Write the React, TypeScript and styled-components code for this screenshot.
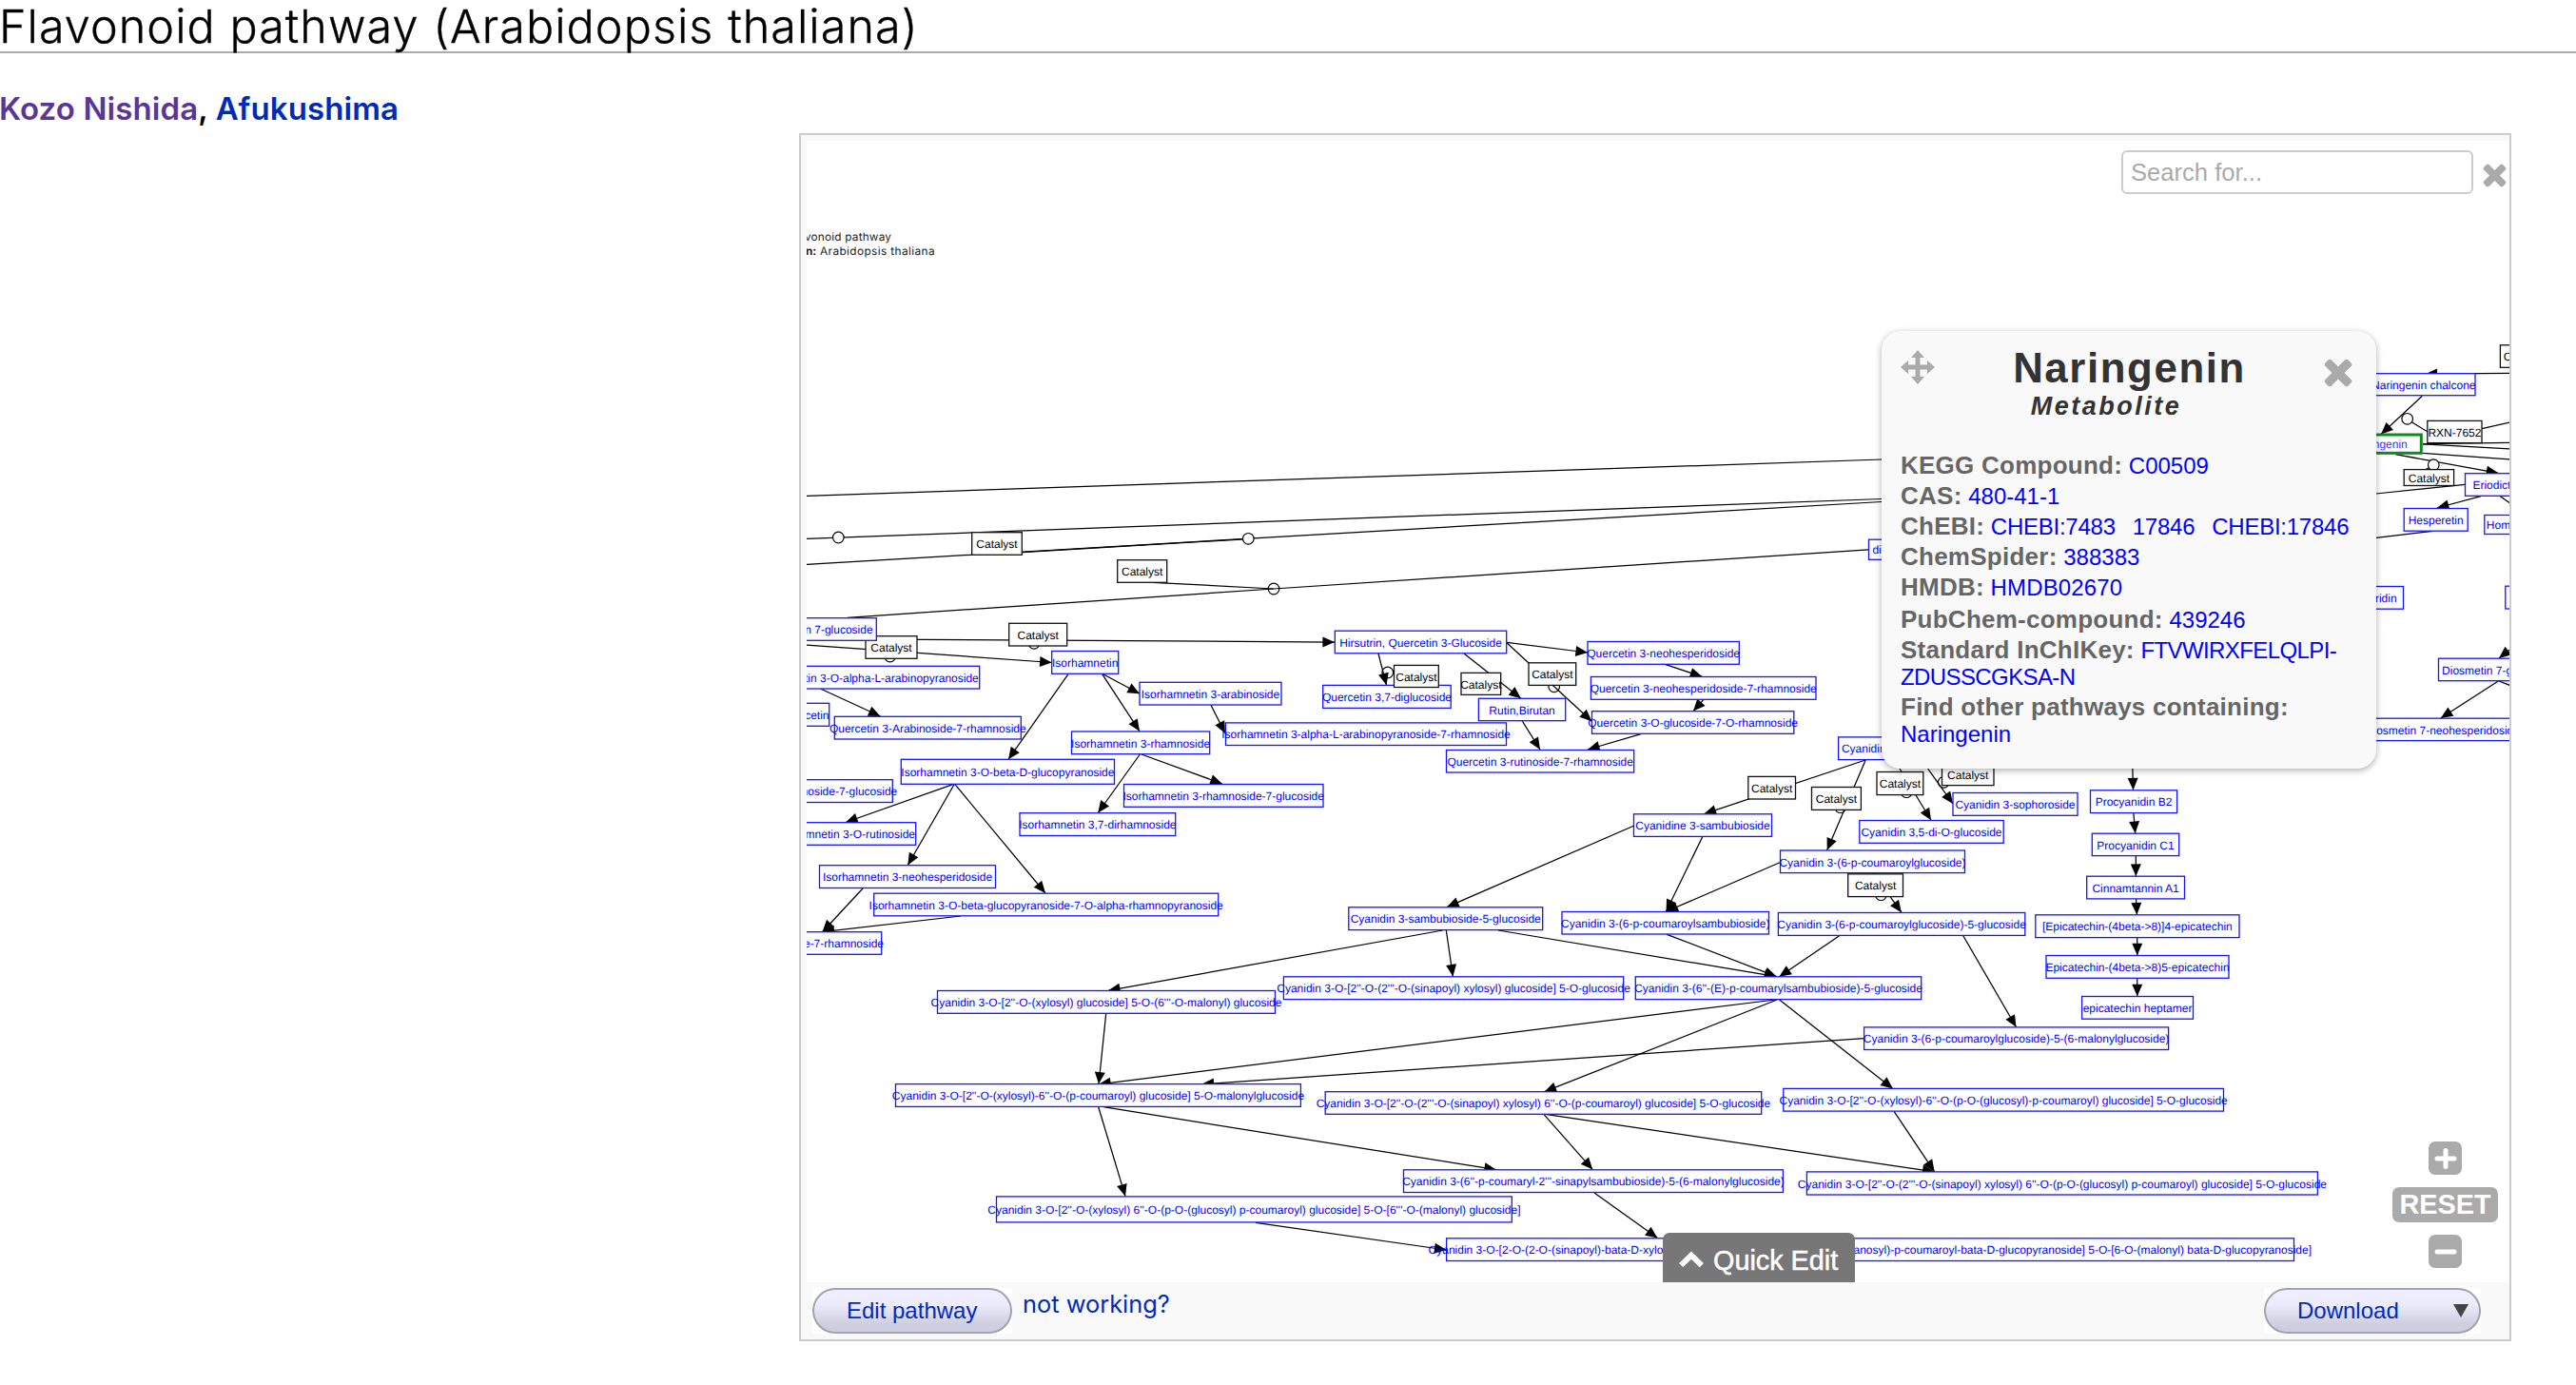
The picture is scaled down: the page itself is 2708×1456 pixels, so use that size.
import React from "react";
import styled, { createGlobalStyle, css } from "styled-components";

const sans = `"Liberation Sans", Arial, Helvetica, sans-serif`;
const wiki = `Inter, "Noto Sans", sans-serif`;

const GlobalStyle = createGlobalStyle`
  html, body { margin: 0; padding: 0; background: #fff; }
  body { font-family: ${wiki}; color: #000; overflow: hidden; }
  a { text-decoration: none; }
`;

const Page = styled.main`
  display: flex;
  flex-direction: column;
  width: 2708px;
  height: 1456px;
`;

const Title = styled.h1`
  margin: 0 0 0 -1px;
  height: 54px;
  border-bottom: 2px solid #aaa;
  font-size: 48.5px;
  font-weight: 300;
  line-height: 56px;
  letter-spacing: 1.05px;
  -webkit-text-stroke: 0.35px #000;
  white-space: nowrap;
`;

const Authors = styled.p`
  margin: 33px 0 0 -1px;
  height: 51px;
  font-size: 33px;
  font-weight: 600;
  line-height: 51px;
  letter-spacing: 0.1px;
  white-space: nowrap;
`;

const AuthorLink = styled.a<{ $visited?: boolean }>`
  color: ${(p) => (p.$visited ? "#5a3696" : "#002bb8")};
`;

const Panel = styled.section`
  display: grid;
  grid-template-rows: 1200px 60px;
  box-sizing: border-box;
  width: 1800px;
  height: 1270px;
  margin-left: 840px;
  padding: 6px 0 0 6px;
  border: 2px solid #ccc;
  background: #f9f9f9;
  font-family: ${sans};
`;

const Viewer = styled.div`
  position: relative;
  overflow: hidden;
  background: #fff;
`;

const Diagram = styled.svg`
  display: block;
  width: 1790px;
  height: 1200px;
  font-family: ${sans};
  font-size: 12px;
  text-rendering: geometricPrecision;
`;

const Edge = styled.line`
  stroke: #000;
  stroke-width: 1.25;
`;

const Head = styled.polygon`
  fill: #000;
`;

const Ring = styled.circle<{ $solid?: boolean }>`
  fill: ${(p) => (p.$solid ? "#fff" : "none")};
  stroke: #000;
  stroke-width: 1.2;
`;

type Tone = "blue" | "black" | "green";

const NodeBox = styled.rect<{ $tone: Tone }>`
  fill: #fff;
  stroke: ${(p) => (p.$tone === "blue" ? "#1414ff" : p.$tone === "green" ? "#118a1c" : "#111")};
  stroke-width: ${(p) => (p.$tone === "green" ? 3 : 1.3)};
`;

const NodeText = styled.text<{ $tone: Tone }>`
  fill: ${(p) => (p.$tone === "black" ? "#000" : p.$tone === "green" ? "#3232ff" : "#0000ff")};
`;

const InfoText = styled.text`
  fill: #1a1a1a;
  font-family: ${wiki};
  font-size: 11.8px;
`;

const SearchBar = styled.form`
  position: absolute;
  top: 10px;
  right: 3px;
  display: flex;
  align-items: center;
  gap: 10px;
`;

const SearchInput = styled.input`
  box-sizing: border-box;
  width: 370px;
  height: 46px;
  padding: 0 0 0 8px;
  border: 2px solid #ccc;
  border-radius: 6px;
  background: #fff;
  font: 25.6px ${sans};
  outline: none;
  &::placeholder { color: #aaa; opacity: 1; }
`;

const CloseMark = styled.svg<{ $size: number; $drop?: number }>`
  display: block;
  flex: none;
  width: ${(p) => p.$size}px;
  height: ${(p) => p.$size}px;
  margin-top: ${(p) => p.$drop ?? 0}px;
  fill: #aaa;
`;

const MoveMark = styled.svg`
  display: block;
  width: 36px;
  height: 36px;
  margin: 5px 0 0 -0.5px;
  fill: #aaa;
`;

const Popup = styled.aside`
  position: absolute;
  left: 1130px;
  top: 200px;
  box-sizing: border-box;
  width: 520px;
  height: 460px;
  padding: 15px 25px 0 20px;
  border-radius: 20px;
  background: #f9f9f9;
  box-shadow: 0 2px 7px rgba(0, 0, 0, 0.32);
`;

const PopupHeader = styled.header`
  display: grid;
  grid-template-columns: 36px 1fr 30px;
  height: 112.5px;
`;

const Heading = styled.div`
  text-align: center;
  color: #333;
  font-weight: bold;
`;

const Name = styled.div`
  font-size: 43.8px;
  line-height: 48px;
  letter-spacing: 1.6px;
`;

const Kind = styled.div`
  margin-top: 1px;
  padding-right: 49px;
  font-size: 27px;
  font-style: italic;
  line-height: 30px;
  letter-spacing: 2.5px;
`;

const Row = styled.div<{ $before?: number; $wrap?: boolean }>`
  margin-top: ${(p) => p.$before ?? 4}px;
  font-size: 24px;
  line-height: 28px;
  white-space: ${(p) => (p.$wrap ? "normal" : "nowrap")};
`;

const Label = styled.b`
  color: #666;
  font-size: 26px;
  line-height: 0;
  letter-spacing: 0.25px;
`;

const RefLink = styled.a<{ $tracking?: number }>`
  color: #0000ff;
  letter-spacing: ${(p) => p.$tracking ?? 0}px;
  & + & { margin-left: 18px; }
`;

const ZoomControls = styled.div`
  position: absolute;
  right: 12px;
  top: 1052px;
  display: flex;
  flex-direction: column;
  align-items: center;
  gap: 13px;
`;

const greyKey = css`
  display: flex;
  align-items: center;
  justify-content: center;
  border-radius: 7px;
  background: #aaa;
`;

const ZoomKey = styled.div`
  ${greyKey}
  width: 35px;
  height: 35px;
`;

const ResetKey = styled.div`
  ${greyKey}
  width: 111px;
  height: 37px;
  color: #fff;
  font-size: 28.8px;
  font-weight: bold;
  line-height: 37px;
`;

const KeyGlyph = styled.svg`
  width: 24px;
  height: 24px;
  stroke: #fff;
  stroke-width: 5;
  stroke-linecap: round;
`;

const QuickEdit = styled.div`
  position: absolute;
  left: 900px;
  bottom: 0;
  display: flex;
  align-items: center;
  gap: 10px;
  box-sizing: border-box;
  width: 202px;
  height: 52px;
  padding: 6px 0 0 17px;
  border-radius: 7px 7px 0 0;
  background: #777;
  color: #fff;
  font-size: 28.8px;
  -webkit-text-stroke: 0.5px #fff;
  white-space: nowrap;
`;

const QuickEditMark = styled.svg`
  width: 26px;
  height: 18px;
  margin-top: -3px;
  fill: none;
  stroke: #fff;
  stroke-width: 6;
`;

const Footer = styled.footer`
  display: flex;
  align-items: flex-start;
  padding: 6px 30px 0 6px;
`;

const PillFrame = styled.div<{ $width: number }>`
  width: ${(p) => p.$width}px;
  height: 48px;
  background: #fff;
`;

const Pill = styled.div<{ $inset: number }>`
  display: flex;
  align-items: center;
  box-sizing: border-box;
  height: 48px;
  padding: 0 11px 1px ${(p) => p.$inset}px;
  border: 2.5px solid #a2a2b0;
  border-radius: 24px;
  background: linear-gradient(#eeeeff 0%, #ececfd 35%, #cfcfdf 80%, #cdcddd 100%);
  color: #002bb8;
  font-size: 24px;
  white-space: nowrap;
`;

const Caret = styled.i`
  margin-left: auto;
  border: 8px solid transparent;
  border-top: 14px solid #444;
  border-bottom: 0;
`;

const HelpLink = styled.a`
  margin: 0 auto 0 11px;
  color: #002bb8;
  font: 400 25.4px/34px ${wiki};
`;

/* Reactions: x1, y1, x2, y2, and 1 when the line ends in an arrowhead. */
const edges: [number, number, number, number, number?][] = [
  [848, 521.3, 1978, 483],
  [848, 566.3, 1978, 524.5],
  [848, 593.3, 1978, 527.5],
  [1074.7, 580.7, 1312, 566.6],
  [890.7, 649.3, 1339, 619],
  [1339, 619, 1964, 577.8],
  [1211.7, 612.3, 1339, 619],
  [921, 672, 1403, 675, 1],
  [848, 678, 1105.7, 696.5, 1],
  [863, 724.3, 925.5, 753, 1],
  [1123, 708.7, 1060, 798.3, 1],
  [1158.7, 708.7, 1198, 768.7, 1],
  [1159.7, 708.7, 1198, 729.3, 1],
  [1273, 741.3, 1288, 771, 1],
  [1198.3, 793, 1154.3, 854.5, 1],
  [1200, 793, 1284.9, 824, 1],
  [1001.7, 824.7, 889, 864.5, 1],
  [1003, 824.7, 954.3, 909.5, 1],
  [1004, 824.7, 1099, 939, 1],
  [907, 934, 864.5, 979.7, 1],
  [1010, 963, 864.5, 979.7, 1],
  [1449, 687, 1457.5, 720.3, 1],
  [1539, 687, 1598.9, 734.2, 1],
  [1584, 675.3, 1669, 686, 1],
  [1584, 675.7, 1673.3, 758.3, 1],
  [1751, 698.7, 1789.3, 711.3, 1],
  [1790.7, 735.7, 1780, 747.6, 1],
  [1725, 771.7, 1669, 788, 1],
  [1600.3, 758, 1619, 788, 1],
  [1961, 799, 1791.5, 855.6, 1],
  [1717.3, 868.3, 1521, 953.6, 1],
  [1789.7, 879.7, 1751.5, 958.3, 1],
  [1871, 906.7, 1751.5, 958.3, 1],
  [1520.3, 978, 1527.4, 1026.6, 1],
  [1516.7, 978, 1165, 1041.3, 1],
  [1575, 978, 1867.5, 1026.6, 1],
  [1752.3, 982.3, 1867.5, 1026.6, 1],
  [1961.2, 799, 1920.7, 893.8, 1],
  [1997, 808, 2030, 862.3, 1],
  [2026.6, 808, 2053, 845, 1],
  [2241.8, 806, 2242.5, 830.5, 1],
  [2242.9, 855, 2244.7, 876, 1],
  [2245.3, 900, 2245.4, 921, 1],
  [2245.6, 945.3, 2246.4, 961.6, 1],
  [2246.7, 986, 2246.8, 1004.3, 1],
  [2246.7, 1028.7, 2246.8, 1047.3, 1],
  [1969, 917.7, 1998.9, 959.2, 1],
  [1933.6, 983.7, 1870.4, 1026.8, 1],
  [2063.8, 983.7, 2119.5, 1079.8, 1],
  [1959.5, 1091.7, 1263.5, 1139.8, 1],
  [1866, 1051, 1155, 1139.8, 1],
  [1868, 1051, 1623.5, 1147.7, 1],
  [1870.6, 1051, 1989.9, 1144.4, 1],
  [1162.7, 1065.7, 1155, 1139.6, 1],
  [1154.7, 1163.7, 1183, 1257.6, 1],
  [1160, 1163.7, 1573, 1229.7, 1],
  [1320, 1285.3, 1520.5, 1314, 1],
  [1623.1, 1171.7, 1674.3, 1229.6, 1],
  [1626.2, 1171.7, 2033.6, 1231.8, 1],
  [1676.1, 1254, 1742.5, 1301.6, 1],
  [1991.1, 1168.3, 2033.6, 1231.8, 1],
  [2640, 392.4, 2549.5, 393.2, 1],
  [2546.3, 416.3, 2503, 456.5, 1],
  [2535.7, 444, 2551.7, 453.7],
  [2609, 450.7, 2640, 443.6],
  [2547, 466.7, 2640, 465.3],
  [2547, 466.9, 2640, 471.9],
  [2546.7, 476.3, 2640, 483],
  [2518.3, 477.7, 2626.3, 497.3, 1],
  [2553, 492, 2547, 495],
  [2591.3, 509.3, 2498, 519],
  [2608, 521.7, 2561.8, 534, 1],
  [2628.3, 521.7, 2640, 530],
  [2557.3, 558.3, 2498, 565.4],
  [2642, 680, 2627, 691.9, 1],
  [2626.3, 716, 2565.8, 755, 1],
  [2627, 716, 2640, 721],
];

/* Catalysis anchors: cx, cy, and 1 when the ring hides the line beneath it. */
const rings: [number, number, number?][] = [
  [881.3, 565, 1],
  [1312.3, 566.3, 1],
  [1339, 619],
  [935.7, 690],
  [1087, 676.3],
  [1458.8, 707],
  [1633.7, 721.8],
  [1934.7, 848.7],
  [2004.2, 832.7],
  [2043.3, 822.3],
  [1977.4, 940.7],
  [2530.7, 440.3],
  [2558.3, 488.7, 1],
];

/* Data nodes: left, top, right, bottom, label. A label runs from `start`, or up to `end`, where it is not centred. */
type PathNode = {
  box: [number, number, number, number];
  label: string;
  tone?: Tone;
  start?: number;
  end?: number;
};

const n = (l: number, t: number, r: number, b: number, label: string, extra: Partial<PathNode> = {}): PathNode => ({
  box: [l, t, r, b],
  label,
  ...extra,
});
const cat = (l: number, t: number, r: number, b: number, extra: Partial<PathNode> = {}): PathNode =>
  n(l, t, r, b, "Catalyst", { tone: "black", ...extra });

const nodes: PathNode[] = [
  cat(1021.7, 559.7, 1074.3, 583.3),
  cat(1174.7, 588.7, 1226.7, 612.3),
  cat(910, 668.7, 964, 692.3),
  n(830, 649.7, 921.3, 673.3, "n 7-glucoside", { end: 917.6 }),
  n(830, 700.3, 1029.7, 724, "tin 3-O-alpha-L-arabinopyranoside", { end: 1028.8 }),
  cat(1060.7, 655.3, 1121.7, 679),
  n(1105.7, 684.5, 1175.7, 708.3, "Isorhamnetin"),
  n(1198, 717.3, 1347, 741, "Isorhamnetin 3-arabinoside"),
  n(830, 739.3, 871.7, 763.3, "cetin", { end: 871.5 }),
  n(877.3, 753.3, 1073.3, 777, "Quercetin 3-Arabinoside-7-rhamnoside"),
  n(1288.5, 759.9, 1583.5, 783.5, "Isorhamnetin 3-alpha-L-arabinopyranoside-7-rhamnoside"),
  n(1126.5, 769, 1271.7, 792.7, "Isorhamnetin 3-rhamnoside"),
  n(947.3, 798.3, 1171.5, 824.3, "Isorhamnetin 3-O-beta-D-glucopyranoside"),
  n(830, 819.7, 938.3, 843.5, "noside-7-glucoside", { end: 943.3 }),
  n(830, 864.7, 962.7, 888.3, "mnetin 3-O-rutinoside", { end: 962 }),
  n(1181.5, 824.5, 1391, 848.3, "Isorhamnetin 3-rhamnoside-7-glucoside"),
  n(1072, 854.7, 1235.7, 878.5, "Isorhamnetin 3,7-dirhamnoside"),
  n(861.5, 909.7, 1046.5, 933.5, "Isorhamnetin 3-neohesperidoside"),
  n(918.7, 939.2, 1280.7, 962.8, "Isorhamnetin 3-O-beta-glucopyranoside-7-O-alpha-rhamnopyranoside"),
  n(830, 979.7, 926.7, 1003.3, "e-7-rhamnoside", { end: 929 }),
  n(1403.3, 663.2, 1583.7, 686.8, "Hirsutrin, Quercetin 3-Glucoside"),
  n(1390.7, 720.4, 1525.2, 744.4, "Quercetin 3,7-diglucoside"),
  cat(1465.5, 699.4, 1512.3, 722.5),
  n(1554.4, 734.3, 1645.7, 757.7, "Rutin,Birutan"),
  cat(1536, 707.4, 1577.7, 730.4),
  cat(1607, 696.8, 1656.7, 720.4),
  n(1669, 674.5, 1828.3, 698.3, "Quercetin 3-neohesperidoside"),
  n(1672.4, 711.5, 1909, 735.3, "Quercetin 3-neohesperidoside-7-rhamnoside"),
  n(1673.5, 747.7, 1885.8, 771.3, "Quercetin 3-O-glucoside-7-O-rhamnoside"),
  n(1520.5, 788.5, 1717.7, 812, "Quercetin 3-rutinoside-7-rhamnoside"),
  n(1717.5, 855.8, 1862.5, 879.4, "Cyanidine 3-sambubioside"),
  n(1417.8, 953.8, 1621.7, 977.6, "Cyanidin 3-sambubioside-5-glucoside"),
  n(1642, 958.5, 1859.5, 982, "Cyanidin 3-(6-p-coumaroylsambubioside)"),
  cat(1837.8, 816.4, 1887.5, 840),
  n(1932.6, 774.9, 1986, 798.6, "Cyanidin"),
  cat(1904.5, 827.5, 1956.4, 851.4),
  cat(1973, 811.5, 2021.8, 835.6),
  cat(2041.5, 802, 2096, 825.6),
  n(2053, 833.5, 2184, 857.3, "Cyanidin 3-sophoroside"),
  n(1954.8, 862.5, 2106.2, 886.3, "Cyanidin 3,5-di-O-glucoside"),
  n(1871.5, 894, 2065.5, 917.6, "Cyanidin 3-(6-p-coumaroylglucoside)"),
  cat(1942.7, 918.8, 2000.5, 942.6),
  n(1869.4, 959.5, 2128.8, 983.4, "Cyanidin 3-(6-p-coumaroylglucoside)-5-glucoside"),
  n(2197.5, 830.8, 2288.6, 854.6, "Procyanidin B2"),
  n(2199.3, 876.2, 2290.7, 899.6, "Procyanidin C1"),
  n(2193.7, 921.2, 2296.5, 944.9, "Cinnamtannin A1"),
  n(2139.8, 961.8, 2354, 985.6, "[Epicatechin-(4beta->8)]4-epicatechin"),
  n(2151, 1004.5, 2343, 1028.3, "Epicatechin-(4beta->8)5-epicatechin"),
  n(2188.6, 1047.5, 2305.5, 1071.2, "epicatechin heptamer"),
  n(1719.3, 1026.8, 2019.7, 1050.6, "Cyanidin 3-(6''-(E)-p-coumarylsambubioside)-5-glucoside"),
  n(1959.6, 1079.9, 2279.6, 1103.5, "Cyanidin 3-(6-p-coumaroylglucoside)-5-(6-malonylglucoside)"),
  n(985.5, 1041.5, 1340.5, 1065.3, "Cyanidin 3-O-[2''-O-(xylosyl) glucoside] 5-O-(6'''-O-malonyl) glucoside"),
  n(1349.4, 1026.8, 1706.7, 1050.6, "Cyanidin 3-O-[2''-O-(2'''-O-(sinapoyl) xylosyl) glucoside] 5-O-glucoside"),
  n(941.5, 1139.6, 1367.4, 1163.4, "Cyanidin 3-O-[2''-O-(xylosyl)-6''-O-(p-coumaroyl) glucoside] 5-O-malonylglucoside"),
  n(1393.2, 1147.7, 1851.7, 1171.3, "Cyanidin 3-O-[2''-O-(2'''-O-(sinapoyl) xylosyl) 6''-O-(p-coumaroyl) glucoside] 5-O-glucoside"),
  n(1047.5, 1257.9, 1589.3, 1284.9, "Cyanidin 3-O-[2''-O-(xylosyl) 6''-O-(p-O-(glucosyl) p-coumaroyl) glucoside] 5-O-[6'''-O-(malonyl) glucoside]"),
  n(1475.5, 1229.8, 1874.4, 1253.5, "Cyanidin 3-(6''-p-coumaryl-2'''-sinapylsambubioside)-5-(6-malonylglucoside)"),
  n(1874.8, 1144.4, 2337.5, 1168.1, "Cyanidin 3-O-[2''-O-(xylosyl)-6''-O-(p-O-(glucosyl)-p-coumaroyl) glucoside] 5-O-glucoside"),
  n(1899.4, 1231.9, 2436.4, 1256, "Cyanidin 3-O-[2''-O-(2'''-O-(sinapoyl) xylosyl) 6''-O-(p-O-(glucosyl) p-coumaroyl) glucoside] 5-O-glucoside"),
  n(1520.6, 1301.8, 2411.5, 1325.5, "Cyanidin 3-O-[2-O-(2-O-(sinapoyl)-bata-D-xylo", { start: 1501.6 }),
  cat(2628.4, 362.8, 2680, 386.3, { start: 2631.8 }),
  n(2470, 392.7, 2602, 415.7, "Naringenin chalcone", { end: 2602.5 }),
  n(2551.8, 442.4, 2609, 465.6, "RXN-7652", { tone: "black" }),
  n(2470, 457, 2545.3, 476.3, "Naringenin", { tone: "green", end: 2530.8 }),
  cat(2527.2, 493.6, 2579.6, 510.5),
  n(2591.5, 497.7, 2670, 521.3, "Eriodictyol", { start: 2599.4 }),
  n(2527.2, 534.5, 2594.2, 558.2, "Hesperetin"),
  n(2611.8, 541.5, 2680, 561.5, "Homoeriodictyol", { start: 2613.8 }),
  n(2470, 616.5, 2526.5, 640.2, "ridin", { end: 2519.6 }),
  n(2633.8, 616.2, 2690, 640, ""),
  n(2563.5, 692.2, 2690, 715.7, "Diosmetin 7-glucoside", { start: 2567.1 }),
  n(2470, 755.2, 2660, 778.6, "Diosmetin 7-neohesperidoside", { start: 2486.8 }),
  n(1964.5, 567.2, 2010, 588.3, "di", { start: 1968.4 }),
];

function arrowPoints(x1: number, y1: number, x2: number, y2: number) {
  const len = Math.hypot(x2 - x1, y2 - y1);
  const ux = (x2 - x1) / len;
  const uy = (y2 - y1) / len;
  const bx = x2 - ux * 12.6;
  const by = y2 - uy * 12.6;
  const half = 5.5;
  return `${x2},${y2} ${bx - uy * half},${by + ux * half} ${bx + uy * half},${by - ux * half}`;
}

function Node({ box: [l, t, r, b], label, tone = "blue", start, end }: PathNode) {
  const x = start ?? end ?? (l + r) / 2;
  const anchor = start !== undefined ? "start" : end !== undefined ? "end" : "middle";
  return (
    <g>
      <NodeBox $tone={tone} x={l} y={t} width={r - l} height={b - t} />
      <NodeText $tone={tone} x={x} y={(t + b) / 2 + 4.7} textAnchor={anchor}>
        {label}
      </NodeText>
    </g>
  );
}

function Pathway() {
  return (
    <Diagram viewBox="848 148 1790 1200">
      <InfoText x={846} y={253} textLength={91}>vonoid pathway</InfoText>
      <InfoText x={847} y={268} fontWeight="bold">n:</InfoText>
      <InfoText x={862} y={268} textLength={120.5}>Arabidopsis thaliana</InfoText>
      {edges.map(([x1, y1, x2, y2, arrow], i) => (
        <g key={i}>
          <Edge x1={x1} y1={y1} x2={x2} y2={y2} />
          {arrow ? <Head points={arrowPoints(x1, y1, x2, y2)} /> : null}
        </g>
      ))}
      {rings.map(([cx, cy, solid], i) => (
        <Ring key={i} cx={cx} cy={cy} r={5.8} $solid={!!solid} />
      ))}
      {nodes.map((node, i) => (
        <Node key={i} {...node} />
      ))}
      <NodeText $tone="blue" x={2430} y={1318.3} textAnchor="end">
        anosyl)-p-coumaroyl-bata-D-glucopyranoside] 5-O-[6-O-(malonyl) bata-D-glucopyranoside]
      </NodeText>
    </Diagram>
  );
}

function Close({ size, drop }: { size: number; drop?: number }) {
  return (
    <CloseMark $size={size} $drop={drop} viewBox="0 0 30 30">
      <g transform="rotate(45 15 15)">
        <rect x="-2" y="10.4" width="34" height="9.2" rx="2.6" />
        <rect x="10.4" y="-2" width="9.2" height="34" rx="2.6" />
      </g>
    </CloseMark>
  );
}

const references: { label: string; links: string[]; before?: number; tracking?: number; wrap?: boolean }[] = [
  { label: "KEGG Compound:", links: ["C00509"], before: 0 },
  { label: "CAS:", links: ["480-41-1"] },
  { label: "ChEBI:", links: ["CHEBI:7483", "17846", "CHEBI:17846"], tracking: -0.25 },
  { label: "ChemSpider:", links: ["388383"] },
  { label: "HMDB:", links: ["HMDB02670"], tracking: 0.15 },
  { label: "PubChem-compound:", links: ["439246"], before: 6 },
  { label: "Standard InChIKey:", links: ["FTVWIRXFELQLPI-ZDUSSCGKSA-N"], tracking: -0.6, wrap: true },
];

function MetabolitePopup() {
  return (
    <Popup>
      <PopupHeader>
        <MoveMark viewBox="0 0 36 36">
          <path d="M18 0l7 8h-4.6v7.6H28V11l8 7-8 7v-4.6h-7.6V28H25l-7 8-7-8h4.6v-7.6H8V25l-8-7 8-7v4.6h7.6V8H11z" />
        </MoveMark>
        <Heading>
          <Name>Naringenin</Name>
          <Kind>Metabolite</Kind>
        </Heading>
        <Close size={30} drop={14} />
      </PopupHeader>
      {references.map(({ label, links, before, tracking, wrap }) => (
        <Row key={label} $before={before} $wrap={wrap}>
          <Label>{label}</Label>{" "}
          {links.map((link) => (
            <RefLink key={link} $tracking={tracking}>
              {link}
            </RefLink>
          ))}
        </Row>
      ))}
      <Row>
        <Label>Find other pathways containing:</Label>
        <br />
        <RefLink>Naringenin</RefLink>
      </Row>
    </Popup>
  );
}

export default function App() {
  return (
    <Page>
      <GlobalStyle />
      <Title>Flavonoid pathway (Arabidopsis thaliana)</Title>
      <Authors>
        <AuthorLink $visited>Kozo Nishida</AuthorLink>, <AuthorLink>Afukushima</AuthorLink>
      </Authors>
      <Panel>
        <Viewer>
          <Pathway />
          <SearchBar>
            <SearchInput placeholder="Search for..." />
            <Close size={25} drop={6} />
          </SearchBar>
          <MetabolitePopup />
          <ZoomControls>
            <ZoomKey>
              <KeyGlyph viewBox="0 0 24 24">
                <path d="M12 3.4v17.2M3 12h18" />
              </KeyGlyph>
            </ZoomKey>
            <ResetKey>RESET</ResetKey>
            <ZoomKey>
              <KeyGlyph viewBox="0 0 24 24">
                <path d="M3 12h18" />
              </KeyGlyph>
            </ZoomKey>
          </ZoomControls>
          <QuickEdit>
            <QuickEditMark viewBox="0 0 26 18">
              <path d="M2.2 15.2L13 4.6l10.8 10.6" />
            </QuickEditMark>
            Quick Edit
          </QuickEdit>
        </Viewer>
        <Footer>
          <PillFrame $width={210}>
            <Pill $inset={34}>Edit pathway</Pill>
          </PillFrame>
          <HelpLink>not working?</HelpLink>
          <PillFrame $width={228}>
            <Pill $inset={33}>
              Download
              <Caret />
            </Pill>
          </PillFrame>
        </Footer>
      </Panel>
    </Page>
  );
}
